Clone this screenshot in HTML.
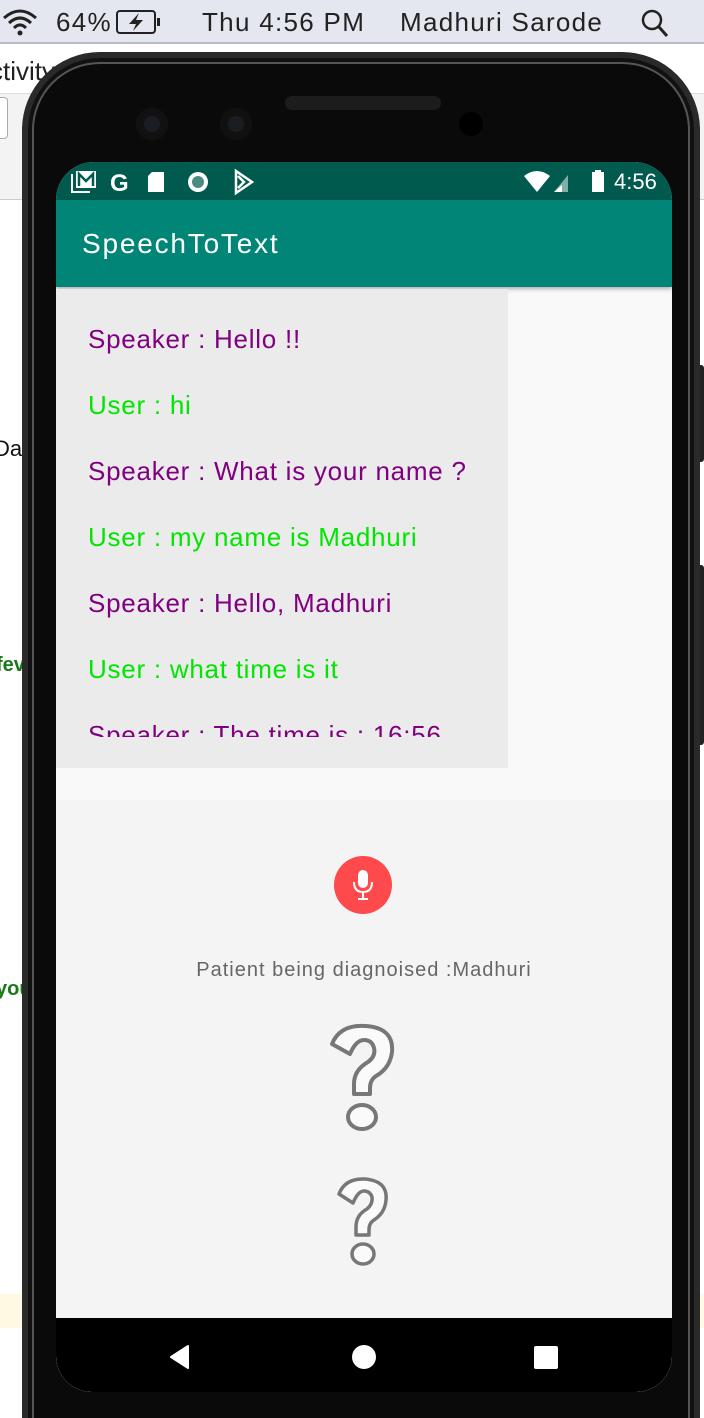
<!DOCTYPE html>
<html><head><meta charset="utf-8"><style>
*{margin:0;padding:0;box-sizing:border-box}
html,body{width:704px;height:1418px;overflow:hidden}
body{position:relative;background:#fff;font-family:"Liberation Sans",sans-serif}
.abs{position:absolute}
.menubar{left:0;top:0;width:704px;height:44px;background:#e4e7f0;border-bottom:2px solid #b8bcc8;font-size:26px;color:#222}
.menubar span{position:absolute;top:7px;letter-spacing:1.3px}
.phone{left:22px;top:52px;width:678px;height:1380px;background:#0a0a0a;border-radius:78px 78px 0 0;border:6px solid #2a2a2a;box-shadow:inset 0 0 0 4px #111,inset 0 0 0 6px #555}
.screen{left:56px;top:162px;width:616px;height:1230px;border-radius:38px 38px 36px 36px;overflow:hidden;background:#f9f9f9}
.line{position:absolute;left:32px;font-size:26px;white-space:nowrap;letter-spacing:0.75px}
.p{color:#800080}.g{color:#00e600}
</style></head><body>
<div class="abs menubar">
 <svg class="abs" style="left:2px;top:8px" width="36" height="28" viewBox="0 0 36 28"><path d="M2 10 Q18 -4 34 10 M7 15 Q18 5 29 15 M12 20 Q18 14 24 20" stroke="#222" stroke-width="3" fill="none"/><circle cx="18" cy="25" r="2.5" fill="#222"/></svg>
 <span style="left:56px">64%</span>
 <svg class="abs" style="left:116px;top:10px" width="48" height="24" viewBox="0 0 48 24"><rect x="1" y="1" width="38" height="22" rx="3" fill="none" stroke="#222" stroke-width="2"/><rect x="41" y="8" width="3" height="8" fill="#222"/><path d="M23 3 L13 14 H20 L17 21 L27 10 H20 Z" fill="#222"/></svg>
 <span style="left:202px">Thu 4:56 PM</span>
 <span style="left:400px">Madhuri Sarode</span>
 <svg class="abs" style="left:640px;top:8px" width="30" height="30" viewBox="0 0 30 30"><circle cx="12" cy="12" r="9" fill="none" stroke="#222" stroke-width="2.5"/><path d="M19 19 L27 28" stroke="#222" stroke-width="3"/></svg>
</div>
<div class="abs" style="left:0;top:46px;width:704px;height:154px;background:#f3f3f3;border-bottom:1px solid #ccc"></div>
<div class="abs" style="left:0;top:46px;width:704px;height:48px;background:#fff;border-bottom:1px solid #ddd"></div>
<div class="abs" style="left:-10px;top:56px;font-size:26px;color:#222">ctivity</div>
<div class="abs" style="left:-10px;top:97px;width:18px;height:42px;border:1px solid #aaa;border-radius:4px;background:#fff"></div>
<div class="abs" style="left:-6px;top:436px;font-size:22px;color:#111">Dat</div>
<div class="abs" style="left:-4px;top:654px;font-size:20px;color:#1a7a1a;font-weight:bold">fev</div>
<div class="abs" style="left:-4px;top:978px;font-size:20px;color:#1a7a1a;font-weight:bold">you</div>
<div class="abs" style="left:0;top:1294px;width:704px;height:34px;background:#fff8e2"></div>
<div class="abs" style="left:695px;top:365px;width:9px;height:97px;background:#222;border-radius:3px"></div>
<div class="abs" style="left:695px;top:565px;width:9px;height:180px;background:#222;border-radius:3px"></div>
<div class="abs phone"></div>
<div class="abs" style="left:285px;top:96px;width:156px;height:14px;border-radius:7px;background:#1c1c1c"></div>
<div class="abs" style="left:136px;top:108px;width:32px;height:32px;border-radius:50%;background:#1a1d22;box-shadow:inset 0 0 0 8px #111"></div>
<div class="abs" style="left:220px;top:108px;width:32px;height:32px;border-radius:50%;background:#1a1d22;box-shadow:inset 0 0 0 8px #111"></div>
<div class="abs" style="left:459px;top:112px;width:24px;height:24px;border-radius:50%;background:#000"></div>
<div class="abs screen">
 <div class="abs" style="left:0;top:0;width:616px;height:38px;background:#005a4d"></div>
 <svg class="abs" style="left:12px;top:6px" width="200" height="28" viewBox="0 0 200 28">
  <path d="M4 6 V24 H22" stroke="#fff" stroke-width="2" fill="none"/><path d="M8 3 H28 V20 H8 Z" fill="#fff"/><path d="M11 18 V6 L18 13 L25 6 V18" stroke="#005a4d" stroke-width="2.5" fill="none"/>
  <text x="42" y="23" font-family="Liberation Sans" font-weight="bold" font-size="24" fill="#fff">G</text>
  <path d="M84 4 H96 V24 H80 V8 Z" fill="#fff"/>
  <circle cx="130" cy="14" r="10" fill="#fff"/><circle cx="130" cy="14" r="6" fill="#4b8c80"/>
  <path d="M168 3 L184 14 L168 25 Z M170 8 L176 14 L170 20" fill="none" stroke="#fff" stroke-width="2.5"/>
 </svg>
 <svg class="abs" style="left:466px;top:6px" width="90" height="28" viewBox="0 0 90 28"><path d="M2 8 Q15 -2 28 8 L15 24 Z" fill="#fff"/><path d="M32 24 L46 7 V24 Z" fill="#7fb0a8"/><path d="M32 24 L40 17 V24 Z" fill="#fff"/><rect x="70" y="4" width="12" height="20" fill="#fff"/><rect x="73" y="2" width="6" height="3" fill="#fff"/></svg>
 <div class="abs" style="left:558px;top:7px;font-size:22px;color:#fff">4:56</div>
 <div class="abs" style="left:0;top:38px;width:616px;height:87px;background:#008577;box-shadow:0 2px 4px rgba(0,0,0,.3)"></div>
 <div class="abs" style="left:26px;top:66px;font-size:28px;color:#fff;letter-spacing:1.8px">SpeechToText</div>
 <div class="abs" style="left:0;top:127px;width:452px;height:479px;background:#ebebeb"></div>
 <div class="abs" style="left:0;top:127px;width:452px;height:448px;overflow:hidden">
  <div class="line p" style="top:35px">Speaker : Hello !!</div>
  <div class="line g" style="top:101px">User : hi</div>
  <div class="line p" style="top:167px">Speaker : What is your name ?</div>
  <div class="line g" style="top:233px">User : my name is Madhuri</div>
  <div class="line p" style="top:299px">Speaker : Hello, Madhuri</div>
  <div class="line g" style="top:365px">User : what time is it</div>
  <div class="line p" style="top:431px">Speaker : The time is : 16:56</div>
 </div>
 <div class="abs" style="left:0;top:638px;width:616px;height:520px;background:#f4f4f4"></div>
 <div class="abs" style="left:278px;top:694px;width:58px;height:58px;border-radius:50%;background:#fe4a4c"></div>
 <svg class="abs" style="left:293px;top:706px" width="28" height="34" viewBox="0 0 28 34"><rect x="9" y="2" width="10" height="18" rx="5" fill="#fff"/><path d="M5 14 Q5 24 14 24 Q23 24 23 14" stroke="#fff" stroke-width="2" fill="none"/><path d="M14 24 V31 M9 31 H19" stroke="#fff" stroke-width="2"/></svg>
 <div class="abs" style="left:0;top:797px;width:616px;text-align:center;font-size:20px;color:#666;letter-spacing:1px">Patient being diagnoised :Madhuri</div>
 <svg class="abs" style="left:270px;top:860px" width="76" height="115" viewBox="0 0 76 115"><path d="M6 22 Q14 2 40 4 Q68 6 66 30 Q64 46 50 54 Q44 58 44 66 V72 H28 V62 Q28 48 42 40 Q50 34 48 26 Q46 18 38 18 Q30 18 24 32 Z" fill="#fafafa" stroke="#777" stroke-width="4" stroke-linejoin="round"/><ellipse cx="36" cy="95" rx="14" ry="12" fill="#fafafa" stroke="#777" stroke-width="4"/></svg>
 <svg class="abs" style="left:278px;top:1014px" width="60" height="95" viewBox="0 0 60 95"><path d="M5 18 Q11 2 31 3 Q54 5 52 24 Q51 37 40 44 Q35 47 35 54 V59 H22 V51 Q22 39 33 33 Q39 28 38 21 Q36 15 30 15 Q24 15 19 27 Z" fill="#fafafa" stroke="#777" stroke-width="3.5" stroke-linejoin="round"/><ellipse cx="29" cy="78" rx="11" ry="10" fill="#fafafa" stroke="#777" stroke-width="3.5"/></svg>
 <div class="abs" style="left:0;top:1156px;width:616px;height:74px;background:#000;border-radius:0 0 36px 36px"></div>
 <svg class="abs" style="left:112px;top:1180px" width="400" height="30" viewBox="0 0 400 30"><path d="M20 4 V26 L3 15 Z" fill="#fff" stroke="#fff" stroke-width="2" stroke-linejoin="round"/><ellipse cx="196" cy="15" rx="12" ry="12" fill="#fff"/><rect x="366" y="4" width="24" height="23" rx="2" fill="#fff"/></svg>
</div>
</body></html>
